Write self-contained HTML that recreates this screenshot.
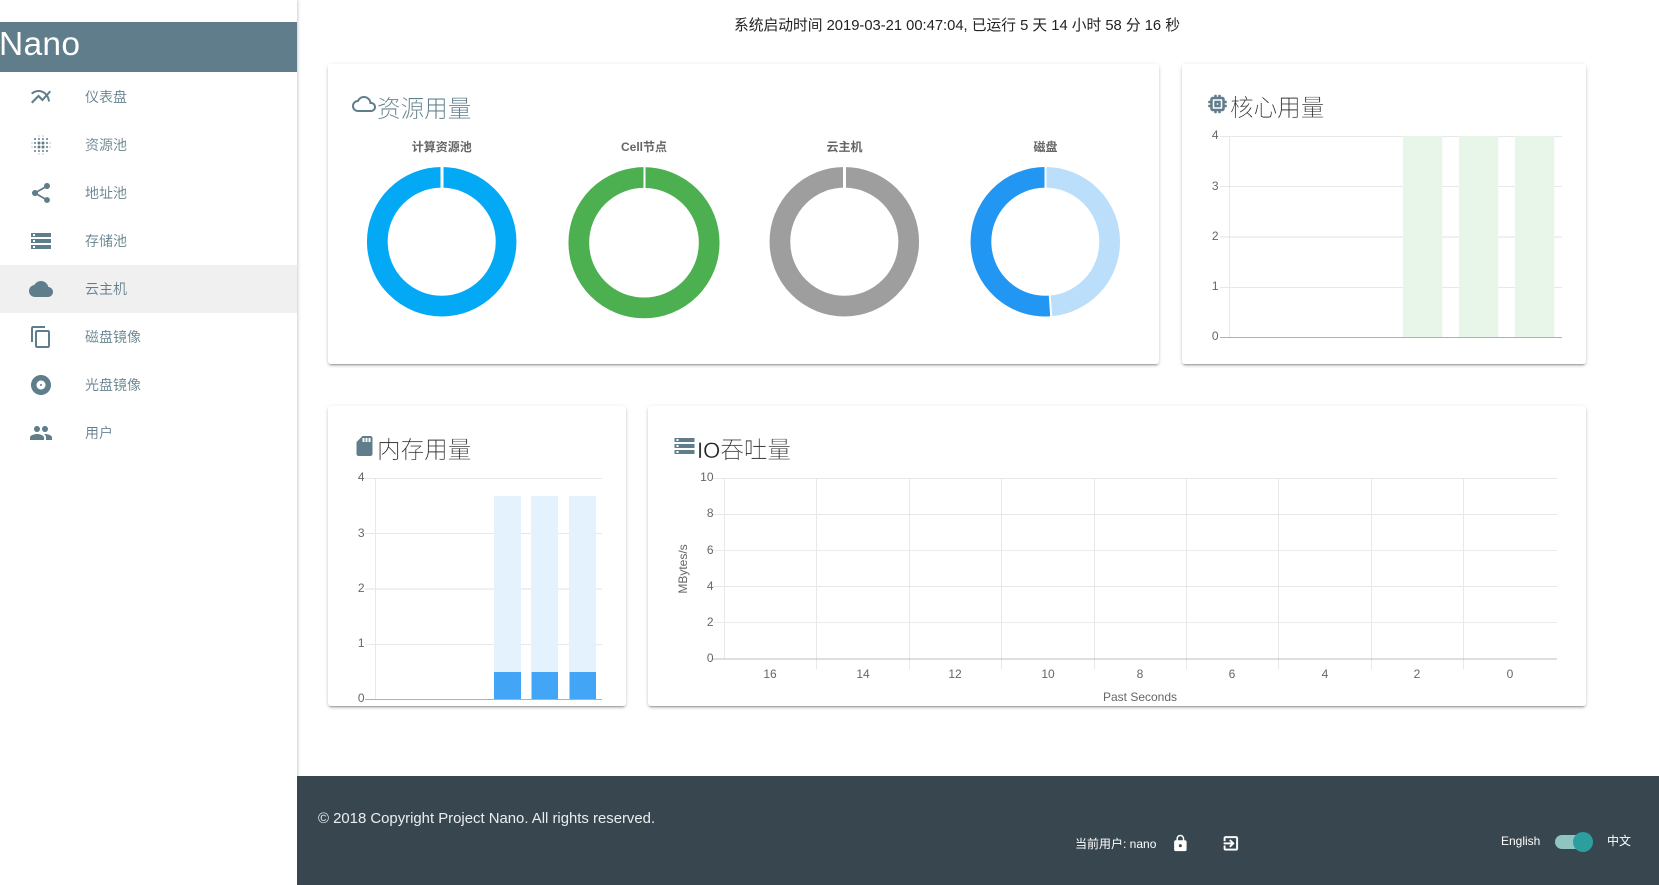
<!DOCTYPE html>
<html lang="zh">
<head>
<meta charset="utf-8">
<title>Nano</title>
<style>
html,body{margin:0;padding:0;width:1659px;height:885px;overflow:hidden;background:#fff;font-family:"Liberation Sans","Noto Sans CJK SC",sans-serif}
.side{position:absolute;left:0;top:0;width:297px;height:885px;background:#fff;box-shadow:1px 0 3px rgba(0,0,0,.2)}
.hd{position:absolute;left:0;top:22px;width:297px;height:50px;background:#607d8b;color:#fff;font-size:33.5px;line-height:46px;letter-spacing:.3px;text-indent:-1px}
.act{position:absolute;left:0;top:265px;width:297px;height:48px;background:#f0f0f0}
.nav{position:absolute;left:85px;font-size:14px;line-height:20px;color:#607d8b;font-family:"Liberation Sans","Noto Sans CJK SC",sans-serif;-webkit-text-stroke:.1px #fff}
.foot{position:absolute;left:297px;top:776px;width:1362px;height:109px;background:#38474f}
.card{position:absolute;background:#fff;border-radius:3px;box-shadow:0 2px 2px 0 rgba(0,0,0,.14),0 3px 1px -2px rgba(0,0,0,.2),0 1px 5px 0 rgba(0,0,0,.12)}
.t{position:absolute;white-space:nowrap}
.ttl{font-size:23.6px;line-height:30px;font-weight:300;color:#222;-webkit-text-stroke:.3px #fff}
svg{position:absolute;left:0;top:0}
</style>
</head>
<body>
<div class="side">
  <div class="hd">Nano</div>
  <div class="act"></div>
</div>
<div class="nav" style="top:87px">仪表盘</div>
<div class="nav" style="top:135px">资源池</div>
<div class="nav" style="top:183px">地址池</div>
<div class="nav" style="top:231px">存储池</div>
<div class="nav" style="top:279px">云主机</div>
<div class="nav" style="top:327px">磁盘镜像</div>
<div class="nav" style="top:375px">光盘镜像</div>
<div class="nav" style="top:423px">用户</div>

<div class="foot"></div>
<div class="card" style="left:328px;top:64px;width:831px;height:300px"></div>
<div class="card" style="left:1182px;top:64px;width:404px;height:300px"></div>
<div class="card" style="left:328px;top:406px;width:298px;height:300px"></div>
<div class="card" style="left:648px;top:406px;width:938px;height:300px"></div>

<div class="t" style="left:734px;top:16px;font-size:14.75px;line-height:20px;color:#222">系统启动时间 2019-03-21 00:47:04, 已运行 5 天 14 小时 58 分 16 秒</div>

<div class="t ttl" style="left:377px;top:95px;color:#607d8b;-webkit-text-stroke:.12px #fff">资源用量</div>
<div class="t ttl" style="left:1230px;top:94px">核心用量</div>
<div class="t ttl" style="left:377px;top:436px">内存用量</div>
<div class="t ttl" style="left:697px;top:436px"><span style="font-size:22px">IO</span>吞吐量</div>

<div class="t" style="left:318px;top:809px;font-size:14.9px;line-height:20px;color:#fff;opacity:.9">© 2018 Copyright Project Nano. All rights reserved.</div>
<div class="t" style="left:1075px;top:835px;font-size:12px;line-height:18px;color:#fff">当前用户: nano</div>
<div class="t" style="left:1501px;top:832px;font-size:12px;line-height:18px;color:#fff">English</div>
<div class="t" style="left:1607px;top:832px;font-size:12px;line-height:18px;color:#fff">中文</div>

<svg width="1659" height="885" viewBox="0 0 1659 885" xmlns="http://www.w3.org/2000/svg">
  <!-- nav icons -->
  <g fill="#607d8b">
    <g transform="translate(29,85)"><path d="M22 6.92l-1.41-1.41-2.85 3.21C15.68 6.4 12.83 5 9.61 5 6.72 5 4.07 6.16 2 8l1.42 1.42C5.12 7.93 7.27 7 9.61 7c2.74 0 5.09 1.26 6.77 3.24l-2.88 3.24-4-4L2 16.99l1.5 1.5 6-6.01 4 4 4.05-4.55c.75 1.35 1.25 2.9 1.44 4.55H21c-.22-2.3-.95-4.39-2.04-6.14L22 6.92z"/></g>
    <g transform="translate(29,133)">
      <circle cx="3" cy="10" r=".5"/><circle cx="3" cy="14" r=".5"/>
      <circle cx="6" cy="6" r="1"/><circle cx="6" cy="10" r="1"/><circle cx="6" cy="14" r="1"/><circle cx="6" cy="18" r="1"/>
      <circle cx="10" cy="3" r=".5"/><circle cx="10" cy="6" r="1"/><circle cx="10" cy="10" r="1.5"/><circle cx="10" cy="14" r="1.5"/><circle cx="10" cy="18" r="1"/><circle cx="10" cy="21" r=".5"/>
      <circle cx="14" cy="3" r=".5"/><circle cx="14" cy="6" r="1"/><circle cx="14" cy="10" r="1.5"/><circle cx="14" cy="14" r="1.5"/><circle cx="14" cy="18" r="1"/><circle cx="14" cy="21" r=".5"/>
      <circle cx="18" cy="6" r="1"/><circle cx="18" cy="10" r="1"/><circle cx="18" cy="14" r="1"/><circle cx="18" cy="18" r="1"/>
      <circle cx="21" cy="10" r=".5"/><circle cx="21" cy="14" r=".5"/>
    </g>
    <g transform="translate(29,181)"><path d="M18 16.08c-.76 0-1.44.3-1.96.77L8.91 12.7c.05-.23.09-.46.09-.7s-.04-.47-.09-.7l7.05-4.11c.54.5 1.25.81 2.04.81 1.66 0 3-1.34 3-3s-1.34-3-3-3-3 1.34-3 3c0 .24.04.47.09.7L8.04 9.81C7.5 9.31 6.79 9 6 9c-1.66 0-3 1.34-3 3s1.34 3 3 3c.79 0 1.5-.31 2.04-.81l7.12 4.16c-.05.21-.08.43-.08.65 0 1.61 1.31 2.92 2.92 2.92 1.61 0 2.92-1.31 2.92-2.92s-1.31-2.92-2.92-2.92z"/></g>
    <g transform="translate(29,229)"><path d="M2 20h20v-4H2v4zm2-3h2v2H4v-2zM2 4v4h20V4H2zm4 3H4V5h2v2zm-4 7h20v-4H2v4zm2-3h2v2H4v-2z"/></g>
    <g transform="translate(29,277)"><path d="M19.35 10.04C18.67 6.59 15.64 4 12 4 9.11 4 6.6 5.64 5.35 8.04 2.34 8.36 0 10.91 0 14c0 3.31 2.69 6 6 6h13c2.76 0 5-2.24 5-5 0-2.64-2.05-4.78-4.65-4.96z"/></g>
    <g transform="translate(29,325)"><path d="M16 1H4c-1.1 0-2 .9-2 2v14h2V3h12V1zm3 4H8c-1.1 0-2 .9-2 2v14c0 1.1.9 2 2 2h11c1.1 0 2-.9 2-2V7c0-1.1-.9-2-2-2zm0 16H8V7h11v14z"/></g>
    <g transform="translate(29,373)"><path d="M12 2C6.48 2 2 6.48 2 12s4.48 10 10 10 10-4.48 10-10S17.52 2 12 2zm0 14.5c-2.49 0-4.5-2.01-4.5-4.5S9.51 7.5 12 7.5s4.5 2.01 4.5 4.5-2.01 4.5-4.5 4.5zm0-5.5c-.55 0-1 .45-1 1s.45 1 1 1 1-.45 1-1-.45-1-1-1z"/></g>
    <g transform="translate(29,421)"><path d="M16 11c1.66 0 2.99-1.34 2.99-3S17.66 5 16 5c-1.66 0-3 1.34-3 3s1.34 3 3 3zm-8 0c1.66 0 2.99-1.34 2.99-3S9.66 5 8 5C6.34 5 5 6.34 5 8s1.34 3 3 3zm0 2c-2.33 0-7 1.17-7 3.5V19h14v-2.5c0-2.33-4.67-3.5-7-3.5zm8 0c-.29 0-.62.02-.97.05 1.16.84 1.97 1.97 1.97 3.45V19h6v-2.5c0-2.33-4.67-3.5-7-3.5z"/></g>

    <!-- title icons -->
    <g transform="translate(352,92)"><path d="M19.35 10.04C18.67 6.59 15.64 4 12 4 9.11 4 6.6 5.64 5.35 8.04 2.34 8.36 0 10.91 0 14c0 3.31 2.69 6 6 6h13c2.76 0 5-2.24 5-5 0-2.64-2.05-4.78-4.65-4.96zM19 18H6c-2.21 0-4-1.79-4-4s1.79-4 4-4h.71C7.37 7.69 9.48 6 12 6c3.04 0 5.5 2.46 5.5 5.5v.5H19c1.66 0 3 1.34 3 3s-1.34 3-3 3z"/></g>
    <g transform="translate(1205.5,92)" stroke="#607d8b" stroke-width=".5"><path d="M15 9H9v6h6V9zm-2 4h-2v-2h2v2zm8-2V9h-2V7c0-1.1-.9-2-2-2h-2V3h-2v2h-2V3H9v2H7c-1.1 0-2 .9-2 2v2H3v2h2v2H3v2h2v2c0 1.1.9 2 2 2h2v2h2v-2h2v2h2v-2h2c1.1 0 2-.9 2-2v-2h2v-2h-2v-2h2zm-4 6H7V7h10v10z"/></g>
    <g transform="translate(352.5,434)"><path d="M18 2h-8L4.02 8 4 20c0 1.1.9 2 2 2h12c1.1 0 2-.9 2-2V4c0-1.1-.9-2-2-2zm-6 6h-2V4h2v4zm3 0h-2V4h2v4zm3 0h-2V4h2v4z"/></g>
    <g transform="translate(672.5,434)"><path d="M2 20h20v-4H2v4zm2-3h2v2H4v-2zM2 4v4h20V4H2zm4 3H4V5h2v2zm-4 7h20v-4H2v4zm2-3h2v2H4v-2z"/></g>
  </g>

  <!-- donuts -->
  <g fill="none" stroke-width="20.7">
    <circle cx="441.7" cy="241.7" r="64.4" stroke="#03a9f4"/>
    <circle cx="644" cy="242.7" r="65.2" stroke="#4caf50"/>
    <circle cx="844.3" cy="241.7" r="64.4" stroke="#9e9e9e"/>
    <circle cx="1045.3" cy="241.7" r="64.4" stroke="#bbdefb"/>
    <path d="M1045.3 177.3A64.4 64.4 0 1 0 1050.4 305.9" stroke="#2196f3"/>
  </g>
  <g stroke="#fff">
    <line x1="442" y1="165" x2="442" y2="190" stroke-width="3"/>
    <line x1="644.5" y1="165" x2="644.5" y2="190" stroke-width="2"/>
    <line x1="844.5" y1="165" x2="844.5" y2="190" stroke-width="3"/>
    <line x1="1045.5" y1="165" x2="1045.5" y2="190" stroke-width="2"/>
    <line x1="1049.5" y1="292" x2="1051.4" y2="319" stroke-width="2"/>
  </g>
  <g font-family="'Liberation Sans','Noto Sans CJK SC',sans-serif" font-size="12" font-weight="bold" fill="#666" text-anchor="middle">
    <text x="441.7" y="151">计算资源池</text>
    <text x="644" y="151">Cell节点</text>
    <text x="844.5" y="151">云主机</text>
    <text x="1045.5" y="151">磁盘</text>
  </g>

  <!-- core chart -->
  <g stroke="#e8e8e8" stroke-width="1">
    <line x1="1220" x2="1562" y1="136.5" y2="136.5"/>
    <line x1="1220" x2="1562" y1="186.5" y2="186.5"/>
    <line x1="1220" x2="1562" y1="237" y2="237" stroke="#f0f0f0" stroke-width="2"/>
    <line x1="1220" x2="1562" y1="287.5" y2="287.5"/>
    <line x1="1229.5" x2="1229.5" y1="136" y2="337"/>
  </g>
  <g fill="#e8f5e9">
    <rect x="1403" y="136" width="39.3" height="201"/>
    <rect x="1459" y="136" width="39.3" height="201"/>
    <rect x="1515" y="136" width="39.3" height="201"/>
  </g>
  <line x1="1220" x2="1562" y1="337.5" y2="337.5" stroke="#b0b0b0"/>
  <g font-family="'Liberation Sans',sans-serif" font-size="12" fill="#666" text-anchor="end">
    <text x="1218.5" y="139">4</text>
    <text x="1218.5" y="190">3</text>
    <text x="1218.5" y="240">2</text>
    <text x="1218.5" y="290">1</text>
    <text x="1218.5" y="340">0</text>
  </g>

  <!-- memory chart -->
  <g stroke="#e8e8e8" stroke-width="1">
    <line x1="365" x2="602" y1="478.5" y2="478.5"/>
    <line x1="365" x2="602" y1="533.5" y2="533.5"/>
    <line x1="365" x2="602" y1="589" y2="589" stroke="#f0f0f0" stroke-width="2"/>
    <line x1="365" x2="602" y1="644.5" y2="644.5"/>
    <line x1="375.5" x2="375.5" y1="478" y2="699"/>
  </g>
  <g fill="#e3f2fd">
    <rect x="494" y="496" width="27" height="176"/>
    <rect x="531" y="496" width="27" height="176"/>
    <rect x="569" y="496" width="27" height="176"/>
  </g>
  <g fill="#42a5f5">
    <rect x="494" y="672" width="27" height="27"/>
    <rect x="531.5" y="672" width="26.5" height="27"/>
    <rect x="569.5" y="672" width="26.5" height="27"/>
  </g>
  <line x1="365" x2="602" y1="699.5" y2="699.5" stroke="#b0b0b0"/>
  <g font-family="'Liberation Sans',sans-serif" font-size="12" fill="#666" text-anchor="end">
    <text x="364.5" y="481">4</text>
    <text x="364.5" y="537">3</text>
    <text x="364.5" y="592">2</text>
    <text x="364.5" y="647">1</text>
    <text x="364.5" y="702">0</text>
  </g>

  <!-- IO chart -->
  <g stroke="#e8e8e8" stroke-width="1">
    <line x1="713" x2="1557" y1="478.5" y2="478.5"/>
    <line x1="713" x2="1557" y1="514.5" y2="514.5"/>
    <line x1="713" x2="1557" y1="550.5" y2="550.5" stroke="#ececec"/>
    <line x1="713" x2="1557" y1="586.5" y2="586.5"/>
    <line x1="713" x2="1557" y1="622.5" y2="622.5" stroke="#ececec"/>
    <line x1="724.5" x2="724.5" y1="478" y2="659"/>
    <line x1="816.5" x2="816.5" y1="478" y2="669.5"/>
    <line x1="909.5" x2="909.5" y1="478" y2="669.5"/>
    <line x1="1001.5" x2="1001.5" y1="478" y2="669.5"/>
    <line x1="1094.5" x2="1094.5" y1="478" y2="669.5"/>
    <line x1="1186.5" x2="1186.5" y1="478" y2="669.5"/>
    <line x1="1278.5" x2="1278.5" y1="478" y2="669.5"/>
    <line x1="1371.5" x2="1371.5" y1="478" y2="669.5"/>
    <line x1="1463.5" x2="1463.5" y1="478" y2="669.5"/>
  </g>
  <line x1="713" x2="1557" y1="659" y2="659" stroke="#bdbdbd"/>
  <g font-family="'Liberation Sans',sans-serif" font-size="12" fill="#666">
    <g text-anchor="end">
      <text x="713.5" y="481">10</text>
      <text x="713.5" y="517">8</text>
      <text x="713.5" y="554">6</text>
      <text x="713.5" y="590">4</text>
      <text x="713.5" y="626">2</text>
      <text x="713.5" y="662">0</text>
    </g>
    <g text-anchor="middle">
      <text x="770" y="678">16</text>
      <text x="863" y="678">14</text>
      <text x="955" y="678">12</text>
      <text x="1048" y="678">10</text>
      <text x="1140" y="678">8</text>
      <text x="1232" y="678">6</text>
      <text x="1325" y="678">4</text>
      <text x="1417" y="678">2</text>
      <text x="1510" y="678">0</text>
      <text x="1140" y="701">Past Seconds</text>
      <text transform="translate(687,569) rotate(-90)">MBytes/s</text>
    </g>
  </g>

  <!-- footer icons -->
  <g fill="#fff">
    <g transform="translate(1171,834) scale(.78)"><path d="M18 8h-1V6c0-2.76-2.24-5-5-5S7 3.24 7 6v2H6c-1.1 0-2 .9-2 2v10c0 1.1.9 2 2 2h12c1.1 0 2-.9 2-2V10c0-1.1-.9-2-2-2zm-6 9c-1.1 0-2-.9-2-2s.9-2 2-2 2 .9 2 2-.9 2-2 2zm3.1-9H8.9V6c0-1.71 1.39-3.1 3.1-3.1 1.71 0 3.1 1.39 3.1 3.1v2z"/></g>
    <g transform="translate(1221.5,834) scale(.78)" stroke="#fff" stroke-width=".5"><path d="M10.09 15.59L11.5 17l5-5-5-5-1.41 1.41L12.67 11H3v2h9.67l-2.58 2.59zM19 3H5c-1.11 0-2 .9-2 2v4h2V5h14v14H5v-4H3v4c0 1.1.89 2 2 2h14c1.1 0 2-.9 2-2V5c0-1.1-.9-2-2-2z"/></g>
  </g>
  <!-- toggle -->
  <rect x="1555" y="835" width="30" height="14" rx="7" fill="#8fc4c0"/>
  <circle cx="1583" cy="842" r="10" fill="#2b9fa0"/>
</svg>
</body>
</html>
